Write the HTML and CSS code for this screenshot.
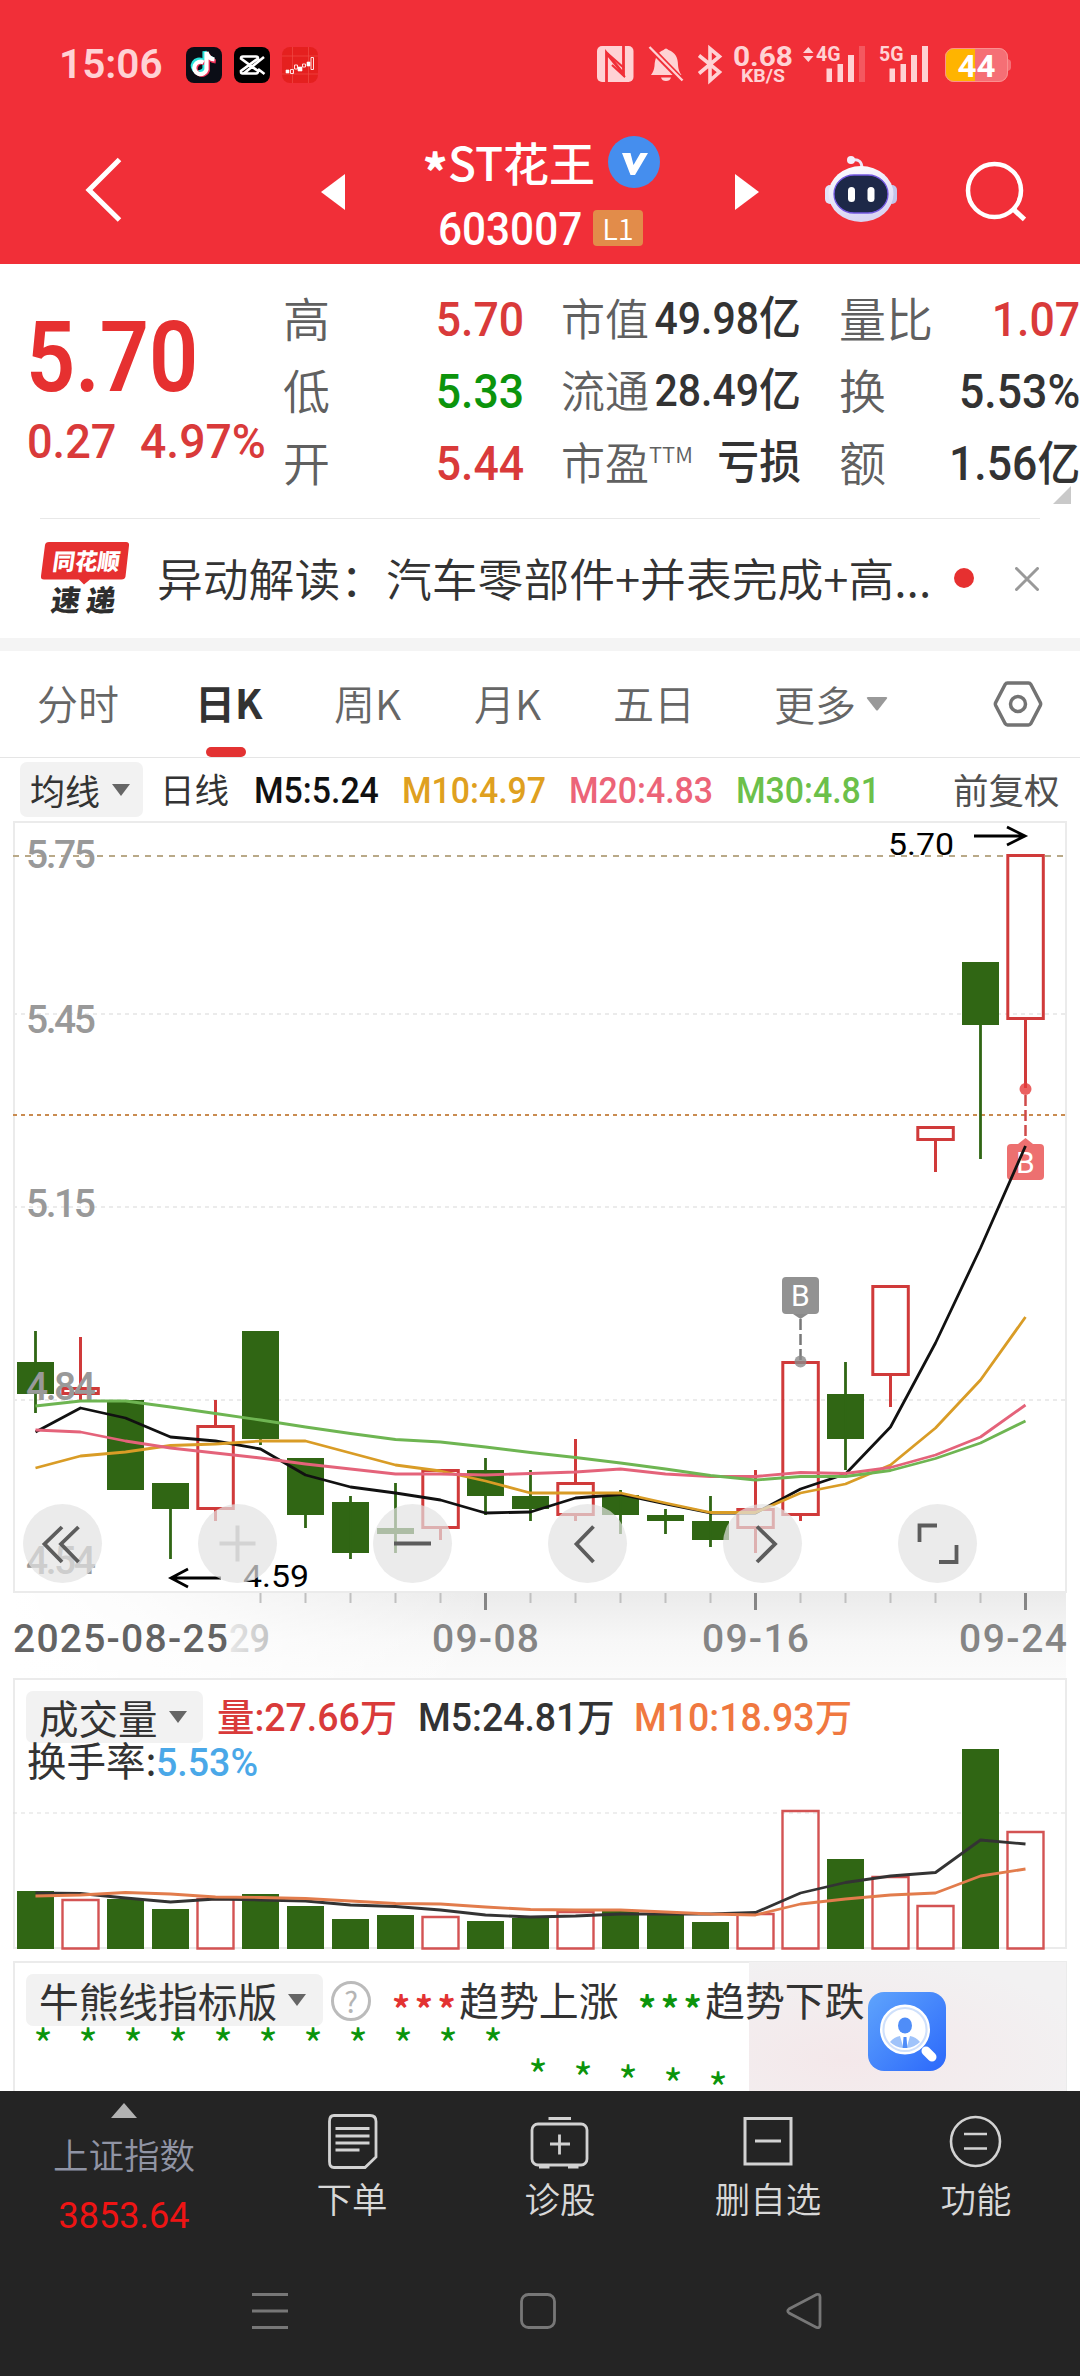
FILE: index.html
```html
<!DOCTYPE html>
<html lang="zh-CN">
<head>
<meta charset="utf-8">
<title>*ST花王 603007</title>
<link rel="stylesheet" href="styles.css">
</head>
<body>
<header class="top">
  <div class="status">
    <span class="clock">15:06</span>
    <div class="apps">
      <svg width="36" height="36" viewBox="0 0 36 36"><rect width="36" height="36" rx="8" fill="#0b0d16"/><g fill="none" stroke-width="4.2"><path d="M18 14.5a6.2 6.2 0 1 0 2 8V5c1 4.500 4 7 8 7.500" stroke="#29e3dc" transform="translate(-1.500 -.8)"/><path d="M18 15a6.200 6.200 0 1 0 3.200 7.500V6c1 4.500 4 7 8 7.500" stroke="#f0325a" transform="translate(.6 1)"/><path d="M17.500 15.500a6.200 6.200 0 1 0 3 7V5c1 4.500 4 7 8 7.500" stroke="#fff"/></g></svg>
      <svg width="36" height="36" viewBox="0 0 36 36"><rect width="36" height="36" rx="8" fill="#000"/><path d="M30 10L11 25.500Q10 26.500 8.500 26.500 7 26.500 7 25v-1l17-12.500Q24 9.500 22 9.500H9Q7 9.500 7 11.500L24 24Q24 26.500 22 26.500H9M24 22l6.500 5" fill="none" stroke="#fff" stroke-width="2.600"/></svg>
      <svg width="36" height="36" viewBox="0 0 36 36"><rect width="36" height="36" rx="8" fill="#e5201f"/><path d="M10.500 0v36M26.500 0v36M0 9h36M0 27h36" stroke="#f04a45" stroke-width=".7"/><path d="M4 23h3v3H4zM16 20h4v4h-4zM25 15h3v4h-3z" fill="#fff" stroke="#fff" stroke-width=".6"/><path d="M8.500 22.500h3v4h-3zM12.500 18h3v4h-3zM20.500 17h3v3h-3zM29 10.500h2.500v12H29z" fill="none" stroke="#ffe0df" stroke-width="1"/></svg>
    </div>
    <svg class="signals" width="420" height="50" viewBox="595 40 420 50">
      <g fill="#ffd2d4">
        <rect x="597" y="46" width="36.500" height="36" rx="5"/>
        <path d="M606.500 82V53l17 21V46" fill="none" stroke="#f12f38" stroke-width="2.800"/>
        <path d="M607 53l17 15M612 65l13 12" fill="none" stroke="#f12f38" stroke-width="2.200"/>
        <path d="M651 75c2-3 3-5 3.500-9 .4-8 3-14 9-16q2.500-3 5 0c7 2.500 9.500 8 9.500 15 .5 5 1.500 7 3.500 10zM661 77.500h10q-1 3.500-5 3.500t-5-3.500z"/>
        <path d="M650 47.500l32 33" stroke="#f12f38" stroke-width="6"/><path d="M649.500 47l33 33.500" stroke="#ffd2d4" stroke-width="2.400"/>
        <path d="M699 55.500l20.500 16.500-9.500 8.500v-32l9.500 8L699 73.500" fill="none" stroke="#ffd2d4" stroke-width="3.600"/>
        <path d="M803 53l5.300-6 5.200 6zM803 56h10.500l-5.200 6z"/>
        <path d="M826.500 68.500h5.500V82h-5.500zM837.500 64h5.500v18h-5.500zM848 55h6v27h-6zM889.500 68.500h5.500V82h-5.500zM900.500 64h5.500v18h-5.500zM911 55h6v27h-6zM922 46h6v36h-6z"/>
        <path d="M859 46h6v36h-6z" opacity=".25"/>
        <text x="733" y="66" font-size="28" font-weight="700" textLength="60" lengthAdjust="spacingAndGlyphs">0.68</text>
        <text x="741" y="82" font-size="18.500" font-weight="700" textLength="44" lengthAdjust="spacingAndGlyphs">KB/S</text>
        <text x="816" y="61" font-size="21" font-weight="700" textLength="24.500" lengthAdjust="spacingAndGlyphs">4G</text>
        <text x="879" y="61" font-size="21" font-weight="700" textLength="24.500" lengthAdjust="spacingAndGlyphs">5G</text>
      </g>
      <rect x="945" y="48" width="63" height="34" rx="9" fill="#f56f75"/>
      <path d="M975 48h-21a9 9 0 0 0-9 9v16a9 9 0 0 0 9 9h21z" fill="#ffb400"/>
      <path d="M1008 59q3 1 3 3v6q0 2-3 3z" fill="#f56f75"/>
      <rect x="945.500" y="48.500" width="62" height="33" rx="8.500" fill="none" stroke="#fb9090" stroke-width="1"/>
      <text x="957.500" y="77" font-size="31" font-weight="700" fill="#fff" textLength="38" lengthAdjust="spacingAndGlyphs">44</text>
    </svg>
  </div>
  <div class="titlebar">
    <svg class="back" width="40" height="68" viewBox="84 156 40 68"><path d="M119.500 159.500L89 190l30.500 30" fill="none" stroke="#fff" stroke-width="5"/></svg>
    <svg class="prev" width="24" height="36" viewBox="0 0 24 36"><path d="M0 18L24 0v36z" fill="#fff"/></svg>
    <div class="stock">
      <h1><span class="star">*</span>ST花王
        <svg width="52" height="52" viewBox="0 0 52 52"><circle cx="26" cy="26" r="26" fill="#458eee"/><path d="M14 17h8.500l3 12 7-12H40L27 39h-4.500z" fill="#fff"/></svg>
      </h1>
      <div class="code"><span class="digits">603007</span><b class="level">L1</b></div>
    </div>
    <svg class="next" width="24" height="36" viewBox="0 0 24 36"><path d="M24 18L0 0v36z" fill="#fff"/></svg>
    <svg class="robot" width="74" height="68" viewBox="824 155 74 68">
      <defs><linearGradient id="shell" x1="0" y1="0" x2=".3" y2="1"><stop offset="0" stop-color="#fff"/><stop offset="1" stop-color="#d9d5f3"/></linearGradient></defs>
      <path d="M852 160q10-2 10 9" fill="none" stroke="#eee6f8" stroke-width="3"/><circle cx="851" cy="160" r="4" fill="#f4eefb"/>
      <rect x="825" y="185" width="10" height="19" rx="5" fill="#e4e2f8"/><rect x="887" y="185" width="10" height="19" rx="5" fill="#c3c5ea"/>
      <ellipse cx="861" cy="194" rx="32.500" ry="28" fill="url(#shell)"/>
      <rect x="834" y="175" width="54" height="38" rx="20" fill="#1d2848" stroke="#7358e0" stroke-width="1.300"/>
      <rect x="848" y="187" width="7" height="15" rx="3.500" fill="#fff"/><rect x="867.500" y="187" width="7" height="15" rx="3.500" fill="#fff"/>
    </svg>
    <svg class="search" width="62" height="62" viewBox="964 160 62 62"><circle cx="994.500" cy="190.500" r="26.500" fill="none" stroke="#fff" stroke-width="4.500"/><path d="M1013 209l11.500 10.500" stroke="#fff" stroke-width="5"/></svg>
  </div>
</header>

<section class="quote">
  <div class="price">
    <div class="last"><span>5.70</span></div>
    <div class="change"><span>0.27</span><span>4.97%</span></div>
  </div>
  <dl class="stats wide">
    <div><dt>高</dt><dd class="up">5.70</dd></div>
    <div><dt>低</dt><dd class="down">5.33</dd></div>
    <div><dt>开</dt><dd class="up">5.44</dd></div>
  </dl>
  <dl class="stats cap">
    <div><dt>市值</dt><dd>49.98<i>亿</i></dd></div>
    <div><dt>流通</dt><dd>28.49<i>亿</i></dd></div>
    <div><dt>市盈<sup>TTM</sup></dt><dd><i>亏损</i></dd></div>
  </dl>
  <dl class="stats wide">
    <div><dt>量比</dt><dd class="up">1.07</dd></div>
    <div><dt>换</dt><dd>5.53%</dd></div>
    <div><dt>额</dt><dd>1.56<i>亿</i></dd></div>
  </dl>
  <svg class="corner" width="18" height="18" viewBox="0 0 18 18"><path d="M18 0v18H0z" fill="#c9c9c9"/></svg>
</section>

<section class="news">
  <svg class="logo" width="90" height="74" viewBox="40 541 90 74">
    <path d="M49 542h77q3.500 0 3 3.500l-3.500 31q-.5 3-4 3H90l-6 5-5-5H44q-3.500 0-3-3.500l4-31q.500-3 4-3z" fill="#e63030"/>
    <g font-weight="900" transform="skewX(-8)"><text x="132" y="570.500" font-size="23" fill="#fff" textLength="67" lengthAdjust="spacingAndGlyphs">同花顺</text><text x="136" y="611" font-size="29" fill="#2e2e2e" textLength="64">速递</text></g>
  </svg>
  <p>异动解读：汽车零部件+并表完成+高...</p>
  <i class="dot"></i>
  <svg class="close" width="24" height="24" viewBox="0 0 24 24"><path d="M1.500 1.500l21 21m0-21l-21 21" stroke="#999" stroke-width="3" stroke-linecap="round"/></svg>
</section>

<nav class="tabs">
  <a>分时</a><a class="on">日K</a><a>周K</a><a>月K</a><a>五日</a><a>更多<svg width="22" height="15" viewBox="0 0 22 15"><path d="M2 1h18q2 0 .8 1.700L12 14q-1 1-2 0L1.200 2.700Q0 1 2 1z" fill="#999"/></svg></a>
  <svg class="gear" width="52" height="48" viewBox="0 0 52 48"><path d="M15.500 3h21q1.500 0 2.300 1.300l9.500 18.200q.7 1.500 0 3l-9.500 18.200Q38 45 36.500 45h-21q-1.500 0-2.300-1.300L3.700 25.500q-.7-1.500 0-3l9.500-18.200Q14 3 15.500 3z" fill="none" stroke="#737373" stroke-width="3.500"/><circle cx="26" cy="24" r="7.500" fill="none" stroke="#737373" stroke-width="3.500"/></svg>
</nav>

<div class="ma">
  <button class="chip">均线<svg width="18" height="12" viewBox="0 0 18 12"><path d="M0 0h18L9 12z" fill="#666"/></svg></button>
  <span class="period">日线</span>
  <span class="m5">M5:5.24</span><span class="m10">M10:4.97</span><span class="m20">M20:4.83</span><span class="m30">M30:4.81</span>
  <span class="adj">前复权</span>
</div>

<svg class="kline" width="1080" height="857" viewBox="0 821 1080 857">
  <defs>
    <linearGradient id="axisY" x1="0" y1="0" x2="0" y2="1"><stop offset="0" stop-color="#ebebeb"/><stop offset=".55" stop-color="#f7f7f7"/><stop offset="1" stop-color="#fbfbfb"/></linearGradient>
    <linearGradient id="axisX"><stop offset="0" stop-color="#fff"/><stop offset=".12" stop-color="#fff" stop-opacity=".85"/><stop offset=".45" stop-color="#fff" stop-opacity="0"/></linearGradient>
    <linearGradient id="fade"><stop offset="0" stop-color="#e8e8e8"/><stop offset="1" stop-color="#c4c4c4"/></linearGradient>
  </defs>
  <rect x="13" y="1593" width="1053" height="85" fill="url(#axisY)"/>
  <rect x="13" y="1593" width="1053" height="85" fill="url(#axisX)"/>
  <path d="M14 1592V822h1052v770z" fill="none" stroke="#ebebeb" stroke-width="2"/>
  <g fill="none" stroke-width="2">
    <path d="M13 1014h1053M13 1207h1053M13 1400h1053" stroke="#ebebeb" stroke-dasharray="4"/>
    <path d="M13 856h1053" stroke="#b9a988" stroke-dasharray="6"/>
    <path d="M13 1115h1053" stroke="#c98b50" stroke-dasharray="4"/>
  </g>
  <g fill="#306614">
    <path d="M17 1362h37v32H17zM107 1400h37v90h-37zM152 1483h37v26h-37zM242 1331h37v108h-37zM287 1458h37v57h-37zM332 1502h37v51h-37zM377 1528h37v6h-37zM467 1470h37v26h-37zM512 1496h37v13h-37zM602 1495h37v20h-37zM647 1515h37v6h-37zM692 1521h37v19h-37zM827 1394h37v45h-37zM962 962h37v63h-37z"/>
    <path d="M35.500 1331v82M170.500 1509v50M260.500 1439v6M305.500 1515v13M350.500 1496v63M395.500 1483v70M485.500 1458v57M530.500 1470v51M620.500 1490v44M665.500 1509v25M710.500 1496v51M845.500 1362v108M980.500 1025v134" stroke="#306614" stroke-width="2.800"/>
  </g>
  <path d="M62.800 1388.500h35.500v5H62.800zM197.800 1426.500h35.500v82h-35.500zM422.800 1470.500h35.500v57h-35.500zM557.800 1483.500h35.500v31h-35.500zM737.800 1509.500h35.500v18h-35.500zM782.800 1362.500h35.500v152h-35.500zM872.800 1286.500h35.500v88h-35.500zM917.800 1127.500h35.500v12h-35.500zM1007.800 855.500h35.500v163h-35.500zM80.500 1337v50M80.500 1395v5M215.500 1400v25M215.500 1510v11M440.500 1529v11M575.500 1439v43M575.500 1516v5M755.500 1470v38M755.500 1529v24M800.500 1516v5M890.500 1376v31M935.500 1141v31M1025.500 1020v68" fill="none" stroke="#d03a3a" stroke-width="3"/>
  <g fill="#8a8a8a">
    <rect x="782" y="1277" width="37" height="37" rx="4" fill="#929292"/><path d="M793 1314h15l-7.500 5z"/>
    <path d="M800.500 1319v42" stroke="#777" stroke-width="2.500" stroke-dasharray="11 4"/><circle cx="800.500" cy="1361.500" r="6" opacity=".8"/>
  </g>
  <g fill="#ed7070">
    <rect x="1007" y="1144" width="37" height="36" rx="4"/><path d="M1018 1144h15l-7.500-6z"/>
    <path d="M1025.500 1095v43" stroke="#cf4a4a" stroke-width="2.500" stroke-dasharray="11 4"/><circle cx="1025.500" cy="1089" r="6" fill="#e63a3a" opacity=".8"/>
  </g>
  <g fill="#fff" font-size="30"><text x="791" y="1306">B</text><text x="1016" y="1173">B</text></g>
  <g class="axis-label" fill="#999">
    <text x="26" y="868" textLength="70">5.75</text><text x="26" y="1033" textLength="70">5.45</text><text x="26" y="1217" textLength="70">5.15</text><text x="26" y="1400" textLength="70">4.84</text><text x="26" y="1574" textLength="70">4.54</text>
  </g>
  <g fill="none" stroke-width="2.800" stroke-linejoin="round">
    <path stroke="#111" d="M35.500 1432L80.500 1408 125.500 1418 170.500 1437 215.500 1441 260.500 1449 305.500 1475 350.500 1487 395.500 1493 440.500 1500 485.500 1513 530.500 1512 575.500 1498 620.500 1494.500 665.500 1504 710.500 1513H755.500L800.500 1489 845.500 1474 890.500 1427 935.500 1343 980.500 1248 1025.500 1146"/>
    <path stroke="#d99c26" d="M35.500 1468L80.500 1456 125.500 1452 170.500 1445.500 215.500 1444 260.500 1441H305.500L350.500 1453 395.500 1465 440.500 1471 485.500 1481 530.500 1493H620.500L665.500 1503 710.500 1512.500H755.500L800.500 1493 845.500 1484 890.500 1465 935.500 1428 980.500 1380 1025.500 1317"/>
    <path stroke="#e4637a" d="M35.500 1430L80.500 1432 125.500 1441 170.500 1448 215.500 1453 260.500 1458 305.500 1464 350.500 1469 395.500 1474 440.500 1474 485.500 1475 530.500 1473.500 575.500 1472 620.500 1469 665.500 1474 710.500 1476.500H755.500L800.500 1472.500 845.500 1473.500 890.500 1467.500 935.500 1455 980.500 1437 1025.500 1405"/>
    <path stroke="#6eb552" d="M35.500 1406L80.500 1401H125.500L170.500 1407 215.500 1413.500 260.500 1420 305.500 1427 350.500 1433.500 395.500 1439.500 440.500 1442 485.500 1447 530.500 1452.500 575.500 1457.500 620.500 1463 665.500 1469 710.500 1475.500 755.500 1480 800.500 1476.500H845.500L890.500 1470.500 935.500 1458.500 980.500 1443 1025.500 1421"/>
  </g>
  <g font-size="32" fill="#000"><text x="888" y="855" textLength="66" lengthAdjust="spacingAndGlyphs">5.70</text><text x="243" y="1587" textLength="66" lengthAdjust="spacingAndGlyphs">4.59</text></g>
  <path d="M974 836h51M1007 827l18 9-18 9M221 1578h-50M188 1569l-17 9 17 9" fill="none" stroke="#000" stroke-width="2.800"/>
  <g fill="#e3e3e3" fill-opacity=".7"><circle cx="62.500" cy="1543.500" r="39.500"/><circle cx="237.500" cy="1543.500" r="39.500"/><circle cx="412.500" cy="1543.500" r="39.500"/><circle cx="587.500" cy="1543.500" r="39.500"/><circle cx="762.500" cy="1543.500" r="39.500"/><circle cx="937.500" cy="1543.500" r="39.500"/></g>
  <path d="M219.500 1543.500h36M237.500 1525.500v36" stroke="#d3d3d3" stroke-width="4"/>
  <path d="M62 1527l-17.500 17 17.500 18M78.500 1527L61 1544l17.500 18M394 1543.500h37M593.500 1526.500l-17 17.500 17 18M757 1526.500l18 17.500-18 18M919.500 1542v-16.500H937M939 1562h17.500v-17" fill="none" stroke="#5c5c5c" stroke-width="3.800"/>
  <path d="M260.500 1593v10M305.500 1593v10M350.500 1593v10M395.500 1593v10M440.500 1593v10M530.500 1593v10M575.500 1593v10M620.500 1593v10M665.500 1593v10M710.500 1593v10M800.500 1593v10M845.500 1593v10M890.500 1593v10M935.500 1593v10M980.500 1593v10" stroke="#c0c0c0" stroke-width="2"/>
  <path d="M485.500 1593v17M755.500 1593v17M1025.500 1593v17" stroke="#858585" stroke-width="3"/>
  <g class="axis-label" fill="#858585">
    <text x="13" y="1652" fill="#636363" textLength="215">2025-08-25</text><text x="229" y="1652" fill="url(#fade)" textLength="41" lengthAdjust="spacingAndGlyphs">29</text>
    <text x="432" y="1652" textLength="107">09-08</text><text x="702" y="1652" textLength="107">09-16</text><text x="959" y="1652" textLength="108">09-24</text>
  </g>
</svg>

<section class="panel volume">
  <svg class="plot" width="1080" height="274" viewBox="0 1678 1080 274">
    <path d="M14 1948V1679h1052v269z" fill="none" stroke="#ebebeb" stroke-width="2"/>
    <path d="M13 1813h1053" stroke="#ddd" stroke-dasharray="4"/>
    <path fill="#306614" d="M17 1891h37v58H17zM107 1899h37v50h-37zM152 1909h37v40h-37zM242 1894h37v55h-37zM287 1906h37v43h-37zM332 1919h37v30h-37zM377 1915h37v34h-37zM467 1921h37v28h-37zM512 1918h37v31h-37zM602 1911h37v38h-37zM647 1915h37v34h-37zM692 1922h37v27h-37zM827 1859h37v90h-37zM962 1749h37v200h-37z"/>
    <path fill="none" stroke="#d35353" stroke-width="2.400" d="M62.500 1900h36v48.500h-36zM197.500 1899h36v49.500h-36zM422.500 1917h36v31.500h-36zM557.500 1912h36v36.500h-36zM737.500 1914h36v34.500h-36zM782.500 1811h36v137.500h-36zM872.500 1877h36v71.500h-36zM917.500 1906h36v42.500h-36zM1007.500 1832h36v116.500h-36z"/>
    <g fill="none" stroke-width="2.800" stroke-linejoin="round">
      <path stroke="#333" d="M35.500 1893L80.500 1893.500 125.500 1898 170.500 1902 215.500 1899 260.500 1900 305.500 1901 350.500 1905 395.500 1906.500 440.500 1910 485.500 1915 530.500 1917 575.500 1916 620.500 1914H710.500L755.500 1912.500 800.500 1893 845.500 1882.500 890.500 1876 935.500 1872.500 980.500 1840 1025.500 1844"/>
      <path stroke="#e27c4c" d="M35.500 1896L80.500 1895 125.500 1892.500 170.500 1894 215.500 1897 260.500 1897.500 305.500 1898.500 350.500 1901 395.500 1903.500 440.500 1904 485.500 1907 530.500 1909.500 575.500 1910 620.500 1910 665.500 1912 710.500 1914 755.500 1915 800.500 1904 845.500 1899 890.500 1895 935.500 1893 980.500 1876 1025.500 1869"/>
    </g>
  </svg>
  <div class="legend">
    <button class="chip">成交量<svg width="18" height="12" viewBox="0 0 18 12"><path d="M0 0h18L9 12z" fill="#666"/></svg></button>
    <span class="vol">量:27.66万</span><span class="vm5">M5:24.81万</span><span class="vm10">M10:18.93万</span>
  </div>
  <div class="turnover">换手率:<b>5.53%</b></div>
</section>

<section class="panel trend">
  <svg class="plot" width="1080" height="130" viewBox="0 1961 1080 130">
    <defs><radialGradient id="blush" cx=".3" cy=".75" r=".8"><stop offset="0" stop-color="#f4e8ea"/><stop offset="1" stop-color="#f2f1f2"/></radialGradient><linearGradient id="app" x1="0" y1="0" x2="1" y2="1"><stop offset="0" stop-color="#5fa4fc"/><stop offset="1" stop-color="#2b68fb"/></linearGradient></defs>
    <path d="M14 2091V1962h1052v129" fill="none" stroke="#ebebeb" stroke-width="2"/>
    <rect x="749" y="1962" width="317" height="129" fill="url(#blush)"/>
    <g class="marks" fill="#0c940c"><text x="43" y="2061">*</text><text x="88" y="2061">*</text><text x="133" y="2061">*</text><text x="178" y="2061">*</text><text x="223" y="2061">*</text><text x="268" y="2061">*</text><text x="313" y="2061">*</text><text x="358" y="2061">*</text><text x="403" y="2061">*</text><text x="448" y="2061">*</text><text x="493" y="2061">*</text><text x="538" y="2092">*</text><text x="583" y="2095">*</text><text x="628" y="2098">*</text><text x="673" y="2101">*</text><text x="718" y="2105">*</text></g>
    <rect x="868" y="1992" width="78" height="79" rx="16" fill="url(#app)"/>
    <path d="M926 2051l6 6" stroke="#fff" stroke-width="9" stroke-linecap="round"/>
    <circle cx="905" cy="2029.500" r="22" fill="#fff" stroke="#cfe0fb" stroke-width="3"/><circle cx="905" cy="2029.500" r="23.800" fill="none" stroke="#fff" stroke-width="2.400"/>
    <ellipse cx="905" cy="2025.500" rx="7" ry="8" fill="#4f8df8"/><path d="M890 2042q4-5 10-6l3.500 12q-8-.5-13.500-6zM920 2042q-4-5-10-6l-3.500 12q8-.5 13.500-6z" fill="#9fc3fa"/><path d="M903.500 2037h3l.8 11h-4.600z" fill="#4f8df8"/>
  </svg>
  <div class="legend">
    <button class="chip">牛熊线指标版<svg width="18" height="12" viewBox="0 0 18 12"><path d="M0 0h18L9 12z" fill="#666"/></svg></button>
    <span class="help">?</span>
    <b class="red">***</b><span class="rise">趋势上涨</span><b class="green">***</b><span class="fall">趋势下跌</span>
  </div>
</section>

<footer>
  <div class="actions">
    <div class="index"><svg width="26" height="15" viewBox="0 0 26 15"><path d="M13 0l13 15H0z" fill="#b2b2b2"/></svg><span>上证指数</span><b>3853.64</b></div>
    <a><svg width="60" height="58" viewBox="322 2112 60 58"><g fill="none" stroke="#d2d2d2" stroke-width="2.800"><path d="M334 2115.500h36q6 0 6 6V2157l-11 10.500h-31q-4.500 0-4.500-6v-40q0-6 4.500-6z"/><path d="M335.500 2128.500h34M335.500 2136h34M335.500 2143h34M335.500 2150h24"/></g></svg><span>下单</span></a>
    <a><svg width="60" height="58" viewBox="530 2112 60 58"><g fill="none" stroke="#d2d2d2" stroke-width="2.800"><rect x="532" y="2124" width="55" height="41" rx="6"/><path d="M548.500 2118.500H571M539 2167h10.500M568 2167h10.500M550 2144h20M559.500 2134.500v20"/></g></svg><span>诊股</span></a>
    <a><svg width="60" height="58" viewBox="737 2112 60 58"><g fill="none" stroke="#d2d2d2" stroke-width="3"><path d="M744 2118.500h46v45.500h-46zM754 2141h26"/></g></svg><span>删自选</span></a>
    <a><svg width="60" height="58" viewBox="946 2112 60 58"><g fill="none" stroke="#d2d2d2" stroke-width="2.600"><circle cx="975.500" cy="2141.500" r="24.500"/><path d="M964 2134h23M964 2148.500h23"/></g></svg><span>功能</span></a>
  </div>
  <div class="sysnav">
    <svg width="36" height="38" viewBox="0 0 36 38"><path d="M0 2.500h36M0 19h36M0 35.500h36" stroke="#777" stroke-width="3"/></svg>
    <svg width="38" height="38" viewBox="0 0 38 38"><rect x="2.500" y="2.500" width="33" height="33" rx="7" fill="none" stroke="#777" stroke-width="2.800"/></svg>
    <svg width="36" height="38" viewBox="0 0 36 38"><path d="M30.500 2.500q3.500-1 3.500 2.500v28q0 3.500-3.500 2.500L3 21q-2.500-2 0-4z" fill="none" stroke="#777" stroke-width="2.800"/></svg>
  </div>
</footer>
</body>
</html>
```
FILE: styles.css
```css
* { box-sizing: border-box; }
body, h1, p, dl, dd { margin: 0; }
body {
  width: 1080px;
  height: 2376px;
  overflow: hidden;
  background: #fff;
  color: #333;
  font-family: Roboto, "Noto Sans CJK SC", sans-serif;
}
svg { display: block; flex: none; }
i { font-style: normal; }
button { border: 0; padding: 0; font: inherit; color: inherit; }

/* header */
.top { height: 264px; background: #f12f38; color: #fff; }
.status { height: 130px; display: flex; padding-left: 59px; }
.clock { width: 127px; line-height: 128px; font-size: 40.500px; font-weight: 600; color: #ffd2d4; }
.apps { display: flex; gap: 12px; padding-top: 47px; }
.signals { margin: 40px 0 0 277px; }
.titlebar { height: 134px; display: flex; }
.back { margin: 26px 0 0 84px; }
.prev { margin: 44px 0 0 197px; }
.stock { width: 390px; padding-left: 78px; white-space: nowrap; }
.stock h1 { display: flex; height: 66px; font: 500 46px/62px "Noto Sans CJK SC", sans-serif; }
.stock h1 svg { margin: 6px 0 0 13px; }
.star { width: 25px; font-weight: 900; line-height: 78px; }
.code { display: flex; margin-left: 15px; }
.digits { width: 155px; font-size: 47px; font-weight: 500; line-height: 66px; transform: scaleX(.9); transform-origin: left; }
.level {
  width: 50px; height: 36px; margin: 14px 0 0; border-radius: 4px; background: #e28c4a;
  font: 350 29px/35px "Noto Sans CJK SC", sans-serif; text-align: center;
}
.next { margin: 44px 0 0 0; }
.robot { margin: 25px 0 0 65px; }
.search { margin: 30px 0 0 66px; }

/* quote */
.quote { height: 255px; display: flex; padding-top: 19px; position: relative; }
.price { width: 283px; color: #e63030; }
.last { height: 148px; font-size: 98px; line-height: 150px; font-weight: 600; padding-left: 26px; }
.last span, .change span { display: inline-block; transform: scaleX(.88); transform-origin: left; }
.change { display: flex; padding-left: 27px; font-size: 49px; font-weight: 500; line-height: 22px; color: #d93a3a; }
.change span { transform: scaleX(.92); }
.change span:first-child { width: 113px; }
.change span:last-child { transform: scaleX(.945); }
.stats div { display: flex; justify-content: space-between; height: 72px; line-height: 73px; white-space: nowrap; }
.stats dt { font-family: "Noto Sans CJK SC", sans-serif; font-weight: 350; font-size: 47px; color: #606060; line-height: 68px; }
.stats dd { font-size: 49px; font-weight: 500; transform: scaleX(.91); transform-origin: right; }
.stats dd i { font-family: "Noto Sans CJK SC", sans-serif; font-size: 47px; line-height: 1; }
.wide { width: 241px; }
.cap { width: 240px; margin: 0 38px 0 37px; }
.cap dt { font-size: 44px; }
/* the unscaled value is wider than the room beside its label */
.cap dd { font-size: 45px; line-height: 71px; margin-left: -30px; }
.cap dd i { font-size: 46px; }
.up { color: #d93a3a; }
.down { color: #0c940c; }
sup { font-size: 22px; line-height: 0; vertical-align: 17px; }
.corner { position: absolute; left: 1053px; top: 222px; }

/* news */
.news { height: 132px; display: flex; position: relative; border-bottom: 13px solid #f4f4f4; }
.news::before { content: ""; position: absolute; left: 40px; top: -1px; width: 1000px; height: 1px; background: #e8e8e8; }
.logo { margin: 22px 0 0 40px; }
.logo text, .news p { font-family: "Noto Sans CJK SC", sans-serif; }
.news p { flex: none; width: 826px; padding-left: 27px; font-size: 45.800px; line-height: 117px; font-weight: 350; white-space: nowrap; }
.dot { width: 20px; height: 20px; border-radius: 50%; background: #e63030; margin: 49px 41px 0 -2px; }
.close { margin-top: 48px; }

/* tabs */
.tabs { height: 107px; border-bottom: 1px solid #e5e5e5; display: flex; font: 350 41px/103px "Noto Sans CJK SC", sans-serif; color: #666; }
.tabs a { width: 139px; white-space: nowrap; }
.tabs a:nth-child(1) { width: 160px; padding-left: 37px; }
.tabs a:nth-child(2) { width: 174px; padding-left: 35px; }
.tabs a:nth-child(3) { width: 140px; }
.tabs a:nth-child(5) { width: 161px; }
.tabs a:nth-child(6) { width: 218px; display: flex; align-items: center; gap: 10px; height: 104px; }
.tabs .on { font-weight: 700; font-size: 40px; color: #333; position: relative; }
.on::after { content: ""; position: absolute; left: 46px; bottom: 0; width: 40px; height: 10px; border-radius: 5px; background: #e33232; }
.gear { margin-top: 29px; }

/* moving averages */
.ma { height: 63px; display: flex; line-height: 66px; font-size: 36px; font-weight: 500; white-space: nowrap; }
.chip { display: flex; align-items: center; background: #f2f2f2; border-radius: 7px; font-family: "Noto Sans CJK SC", sans-serif; font-weight: 400; }
.ma .chip { width: 123px; height: 55px; margin: 4px 17px 0 20px; padding-left: 10px; font-size: 35px; gap: 12px; line-height: 50px; }
.ma span { transform-origin: left; transform: scaleX(.94); }
.ma .period, .ma .adj { font: 400 34.500px/61px "Noto Sans CJK SC", sans-serif; transform: none; }
.period { width: 94px; }
.m5 { width: 148px; color: #111; }
.m10 { width: 167px; color: #dfa020; }
.m20 { width: 167px; color: #ec6478; }
.m30 { width: 217px; color: #6cc04a; }
.ma .adj { font-size: 35.500px; color: #505050; }

/* chart */
.axis-label { font-size: 39px; font-weight: 500; }

/* lower panels */
.panel { position: relative; }
.plot { position: absolute; left: 0; top: 0; }
.volume { height: 283px; padding-top: 13px; }
.legend { position: relative; display: flex; height: 52px; padding-left: 26px; font: 400 39.500px/49px "Noto Sans CJK SC", sans-serif; white-space: nowrap; }
.legend .chip { height: 52px; padding-left: 13px; gap: 11px; font-size: 39.500px; line-height: 48px; }
.volume .chip { width: 177px; margin-right: 14px; }
.volume .legend > span { font: 500 38px/55px Roboto, "Noto Sans CJK SC", sans-serif; transform-origin: left; transform: scaleX(.985); }
.volume .legend .vol { width: 201px; color: #d93a3a; }
.volume .legend .vm5 { width: 216px; }
.volume .legend .vm10 { color: #f07840; }
.turnover { position: relative; padding-left: 27px; font: 400 39.500px/32px "Noto Sans CJK SC", sans-serif; }
.turnover b { display: inline-block; font: 500 38.500px/32px Roboto, sans-serif; color: #4aa8e8; transform-origin: left; transform: scaleX(.975); }
.trend { height: 130px; padding-top: 13px; overflow: hidden; }
.trend .chip { flex: none; width: 297px; margin-right: 8px; font-size: 39.700px; }
.help { flex: none; width: 40px; height: 40px; margin: 7px 21px 0 0; border: 3px solid #bbb; border-radius: 50%; color: #b5b5b5; font-size: 29px; line-height: 33px; text-align: center; }
.legend b { flex: none; width: 67px; height: 52px; font: 700 36px/66px "Noto Sans CJK SC", sans-serif; letter-spacing: 4.500px; }
.red { color: #e33232; }
.green { color: #0c940c; }
.rise { flex: none; width: 179px; }
.rise, .fall { font-size: 39.900px; }
.marks { font: 400 42px "Noto Sans CJK SC", sans-serif; text-anchor: middle; }

/* footer */
footer { height: 285px; background: #242424; color: #d8d8d8; font: 350 35.500px/50px "Noto Sans CJK SC", sans-serif; }
.actions { display: flex; height: 201px; }
.actions a { width: 208px; display: flex; flex-direction: column; align-items: center; padding-top: 21px; }
.actions a span { line-height: 50px; margin-top: 3px; }
.index { width: 248px; display: flex; flex-direction: column; align-items: center; padding-top: 12px; color: #9094a4; }
.index span { margin-top: 11px; }
.index b { font: 400 36px/50px Roboto, sans-serif; color: #ee1414; margin-top: 12px; }
.sysnav { display: flex; padding-left: 252px; }
.sysnav svg:nth-child(2) { margin-left: 231px; }
.sysnav svg:nth-child(3) { margin-left: 229px; }
```
